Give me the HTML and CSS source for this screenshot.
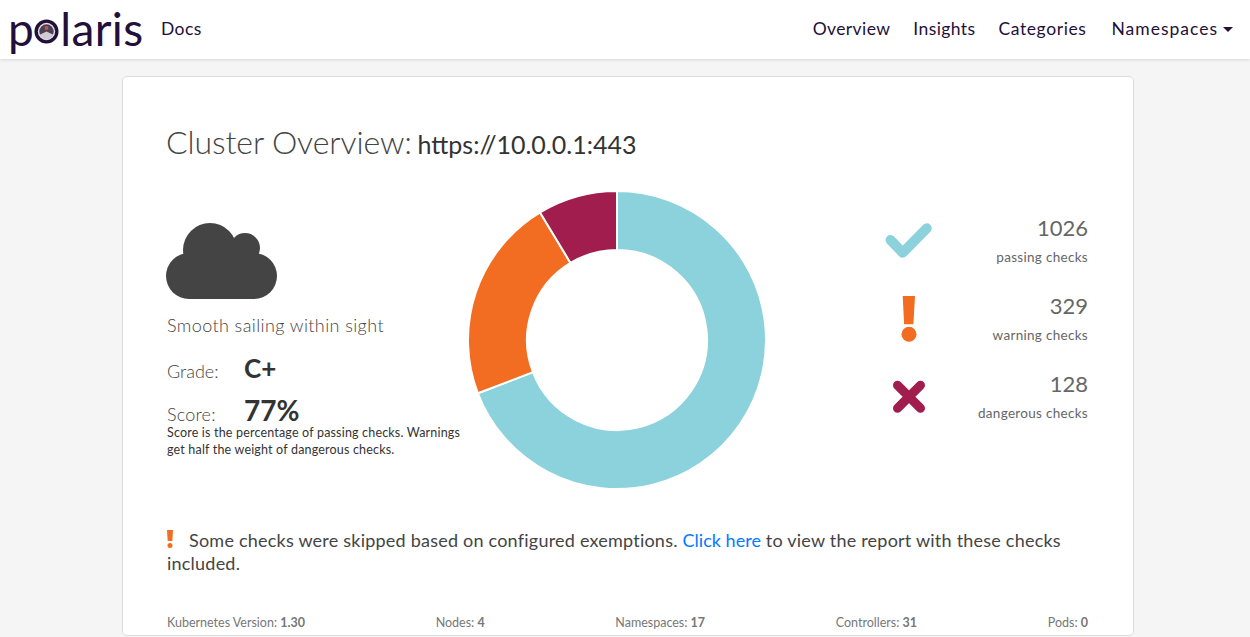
FILE: index.html
```html
<!DOCTYPE html>
<html>
  <head>
    <title>Polaris</title>
    <link rel="stylesheet" href="styles.css">
  </head>
  <body>
    <nav class="navbar">
      <a class="logo">p<svg class="logo-o" viewBox="0 0 26 26"><circle cx="13" cy="13" r="12.500" fill="#23103a"/><circle cx="13" cy="13" r="9" fill="#e4e2e6"/><circle cx="13" cy="13" r="7.500" fill="#4a4058"/><path d="M6 16.500L13 13L20 16.500A7.500 7.500 0 0 1 6 16.500Z" fill="#cfccd3"/><rect x="11.200" y="7.500" width="3.600" height="3.600" fill="#c8553d"/></svg>laris</a>
      <a class="nav-link docs">Docs</a>
      <div class="nav-right">
        <a class="nav-link">Overview</a>
        <a class="nav-link">Insights</a>
        <a class="nav-link categories">Categories</a>
        <a class="nav-link namespaces">Namespaces<span class="caret"></span></a>
      </div>
    </nav>
    <main class="card">
      <h3 class="title">Cluster Overview: <span class="cluster">https://10.0.0.1:443</span></h3>
      <div class="summary">
        <div class="grade-col">
          <svg class="cloud" viewBox="0 0 111 76"><g fill="#444"><circle cx="44" cy="27" r="27"/><circle cx="79" cy="25" r="15"/><rect y="30" width="111" height="46" rx="23"/></g></svg>
          <div class="weather">Smooth sailing within sight</div>
          <div class="metric grade"><span class="metric-label">Grade:</span><strong>C+</strong></div>
          <div class="metric score"><span class="metric-label">Score:</span><strong>77%</strong></div>
          <p class="score-note">Score is the percentage of passing checks. Warnings<br>get half the weight of dangerous checks.</p>
        </div>
        <svg class="donut" viewBox="0 0 298 298">
          <g stroke="#fff" stroke-width="2" stroke-linejoin="round">
            <path fill="#8cd2dc" d="M149 0A149 149 0 1 1 9.85 202.25L64.95 181.17A90 90 0 1 0 149 59Z"/>
            <path fill="#f26d21" d="M9.85 202.25A149 149 0 0 1 72.06 21.41L102.52 71.93A90 90 0 0 0 64.95 181.17Z"/>
            <path fill="#a11d4d" d="M72.06 21.41A149 149 0 0 1 149 0V59A90 90 0 0 0 102.52 71.93Z"/>
          </g>
        </svg>
        <div class="stats">
          <div class="stat">
            <svg class="stat-icon" viewBox="0 0 48 48"><path d="M6.500 24L18.700 36.700L42.800 12.200" fill="none" stroke="#8cd2dc" stroke-width="10" stroke-linecap="round" stroke-linejoin="round"/></svg>
            <div class="stat-text"><div class="stat-num">1026</div><div class="stat-label">passing checks</div></div>
          </div>
          <div class="stat">
            <svg class="stat-icon" viewBox="0 0 48 48"><path d="M18.700 2H31L29.400 30.300H20.100Z" fill="#f26d21"/><circle cx="25" cy="40.300" r="7.500" fill="#f26d21"/></svg>
            <div class="stat-text"><div class="stat-num">329</div><div class="stat-label">warning checks</div></div>
          </div>
          <div class="stat">
            <svg class="stat-icon" viewBox="0 0 48 48"><path d="M13.500 13.200L36.500 36.200M36.500 13.200L13.500 36.200" fill="none" stroke="#a11d4d" stroke-width="9" stroke-linecap="round"/></svg>
            <div class="stat-text"><div class="stat-num">128</div><div class="stat-label">dangerous checks</div></div>
          </div>
        </div>
      </div>
      <p class="notice"><svg class="notice-icon" viewBox="0 0 6 18"><path d="M0 0H6L5.300 11H.7Z" fill="#f26d21"/><circle cx="3" cy="15.500" r="2.500" fill="#f26d21"/></svg>Some checks were skipped based on configured exemptions. <a class="link">Click here</a> to view the report with these checks<br>included.</p>
      <div class="footer">
        <span>Kubernetes Version: <b>1.30</b></span>
        <span>Nodes: <b>4</b></span>
        <span>Namespaces: <b>17</b></span>
        <span>Controllers: <b>31</b></span>
        <span>Pods: <b>0</b></span>
      </div>
    </main>
  </body>
</html>
```

FILE: styles.css
```css
html, body {
    margin: 0;
    height: 637px;
    overflow: hidden;
    background: #f5f5f5;
    font-family: "Lato", "Open Sans", sans-serif;
    color: #444;
}
.navbar {
    display: flex;
    align-items: center;
    height: 59px;
    padding: 0 17px 0 8px;
    background: #fff;
    box-shadow: 0 1px 3px rgba(0, 0, 0, 0.12);
}
.logo {
    display: flex;
    align-items: center;
    width: 135px;
    margin-top: -2px;
    font-size: 46px;
    font-weight: 400;
    letter-spacing: 0.4px;
    color: #23103a;
}
.logo-o {
    flex: none;
    width: 25px;
    height: 25px;
    margin: 6px 1px 0 0;
}
.nav-link {
    margin-top: -2px;
    font-size: 17.500px;
    letter-spacing: 0.4px;
    color: #23103a;
}
.docs {
    margin-left: 18px;
}
.nav-right {
    display: flex;
    gap: 23px;
    margin-left: auto;
}
.categories {
    letter-spacing: 0.6px;
}
.namespaces {
    margin-left: 2px;
    letter-spacing: 1px;
}
.caret {
    display: inline-block;
    margin-left: 5px;
    vertical-align: 3px;
    border-top: 5px solid #23103a;
    border-left: 5px solid transparent;
    border-right: 5px solid transparent;
}
.card {
    width: 924px;
    height: 558px;
    margin: 17px 0 0 122px;
    padding: 0 43px;
    background: #fff;
    border: 1px solid #dcdcdc;
    border-radius: 5px;
}
.title {
    margin: 46px 0 30px;
    height: 38px;
    line-height: 38px;
    font-size: 32px;
    font-weight: 300;
    letter-spacing: -0.1px;
    color: #444;
}
.cluster {
    margin-left: -3px;
    font-size: 25px;
    font-weight: 400;
    letter-spacing: 0;
    color: #333;
}
.summary {
    display: flex;
    height: 298px;
}
.grade-col {
    width: 302px;
    flex: none;
    padding-top: 32px;
}
.cloud {
    display: block;
    width: 111px;
    height: 76px;
}
.weather {
    margin: 14px 0 0 1px;
    font-size: 18px;
    font-weight: 300;
    letter-spacing: 0.4px;
    line-height: 24px;
}
.metric {
    display: flex;
    align-items: baseline;
    margin-left: 1px;
    font-size: 18px;
    font-weight: 300;
}
.metric-label {
    width: 77px;
}
.metric strong {
    font-size: 26px;
    font-weight: 700;
    color: #333;
}
.grade {
    margin-top: 15px;
    height: 34px;
}
.score {
    margin-top: 7px;
    height: 31px;
}
.score .metric-label {
    letter-spacing: 0.2px;
}
.score strong {
    font-size: 28px;
}
.score-note {
    margin: 0 0 0 1px;
    font-size: 12.500px;
    letter-spacing: 0.18px;
    line-height: 17px;
    color: #333;
}
.donut {
    display: block;
    flex: none;
    width: 298px;
    height: 298px;
}
.stats {
    flex: 1;
    padding-top: 10px;
}
.stat {
    display: flex;
    align-items: center;
    height: 78px;
    padding: 0 2px 0 118px;
}
.stat-icon {
    width: 48px;
    height: 48px;
}
.stat-text {
    flex: 1;
    text-align: right;
    color: #666;
}
.stat-num {
    font-size: 22px;
    font-weight: 400;
    line-height: 28px;
}
.stat-label {
    margin-top: 6px;
    font-size: 13.500px;
    letter-spacing: 0.3px;
    line-height: 18px;
}
.notice {
    margin: 40px 0 0 1px;
    font-size: 18px;
    letter-spacing: 0.22px;
    line-height: 23px;
}
.notice-icon {
    width: 6px;
    height: 18px;
    margin-right: 16px;
    vertical-align: -1px;
}
.link {
    letter-spacing: 0.03px;
    color: #007bff;
}
.footer {
    display: flex;
    justify-content: space-between;
    margin-top: 40px;
    padding: 0 2px 0 1px;
    font-size: 12.500px;
    color: #777;
}
```
